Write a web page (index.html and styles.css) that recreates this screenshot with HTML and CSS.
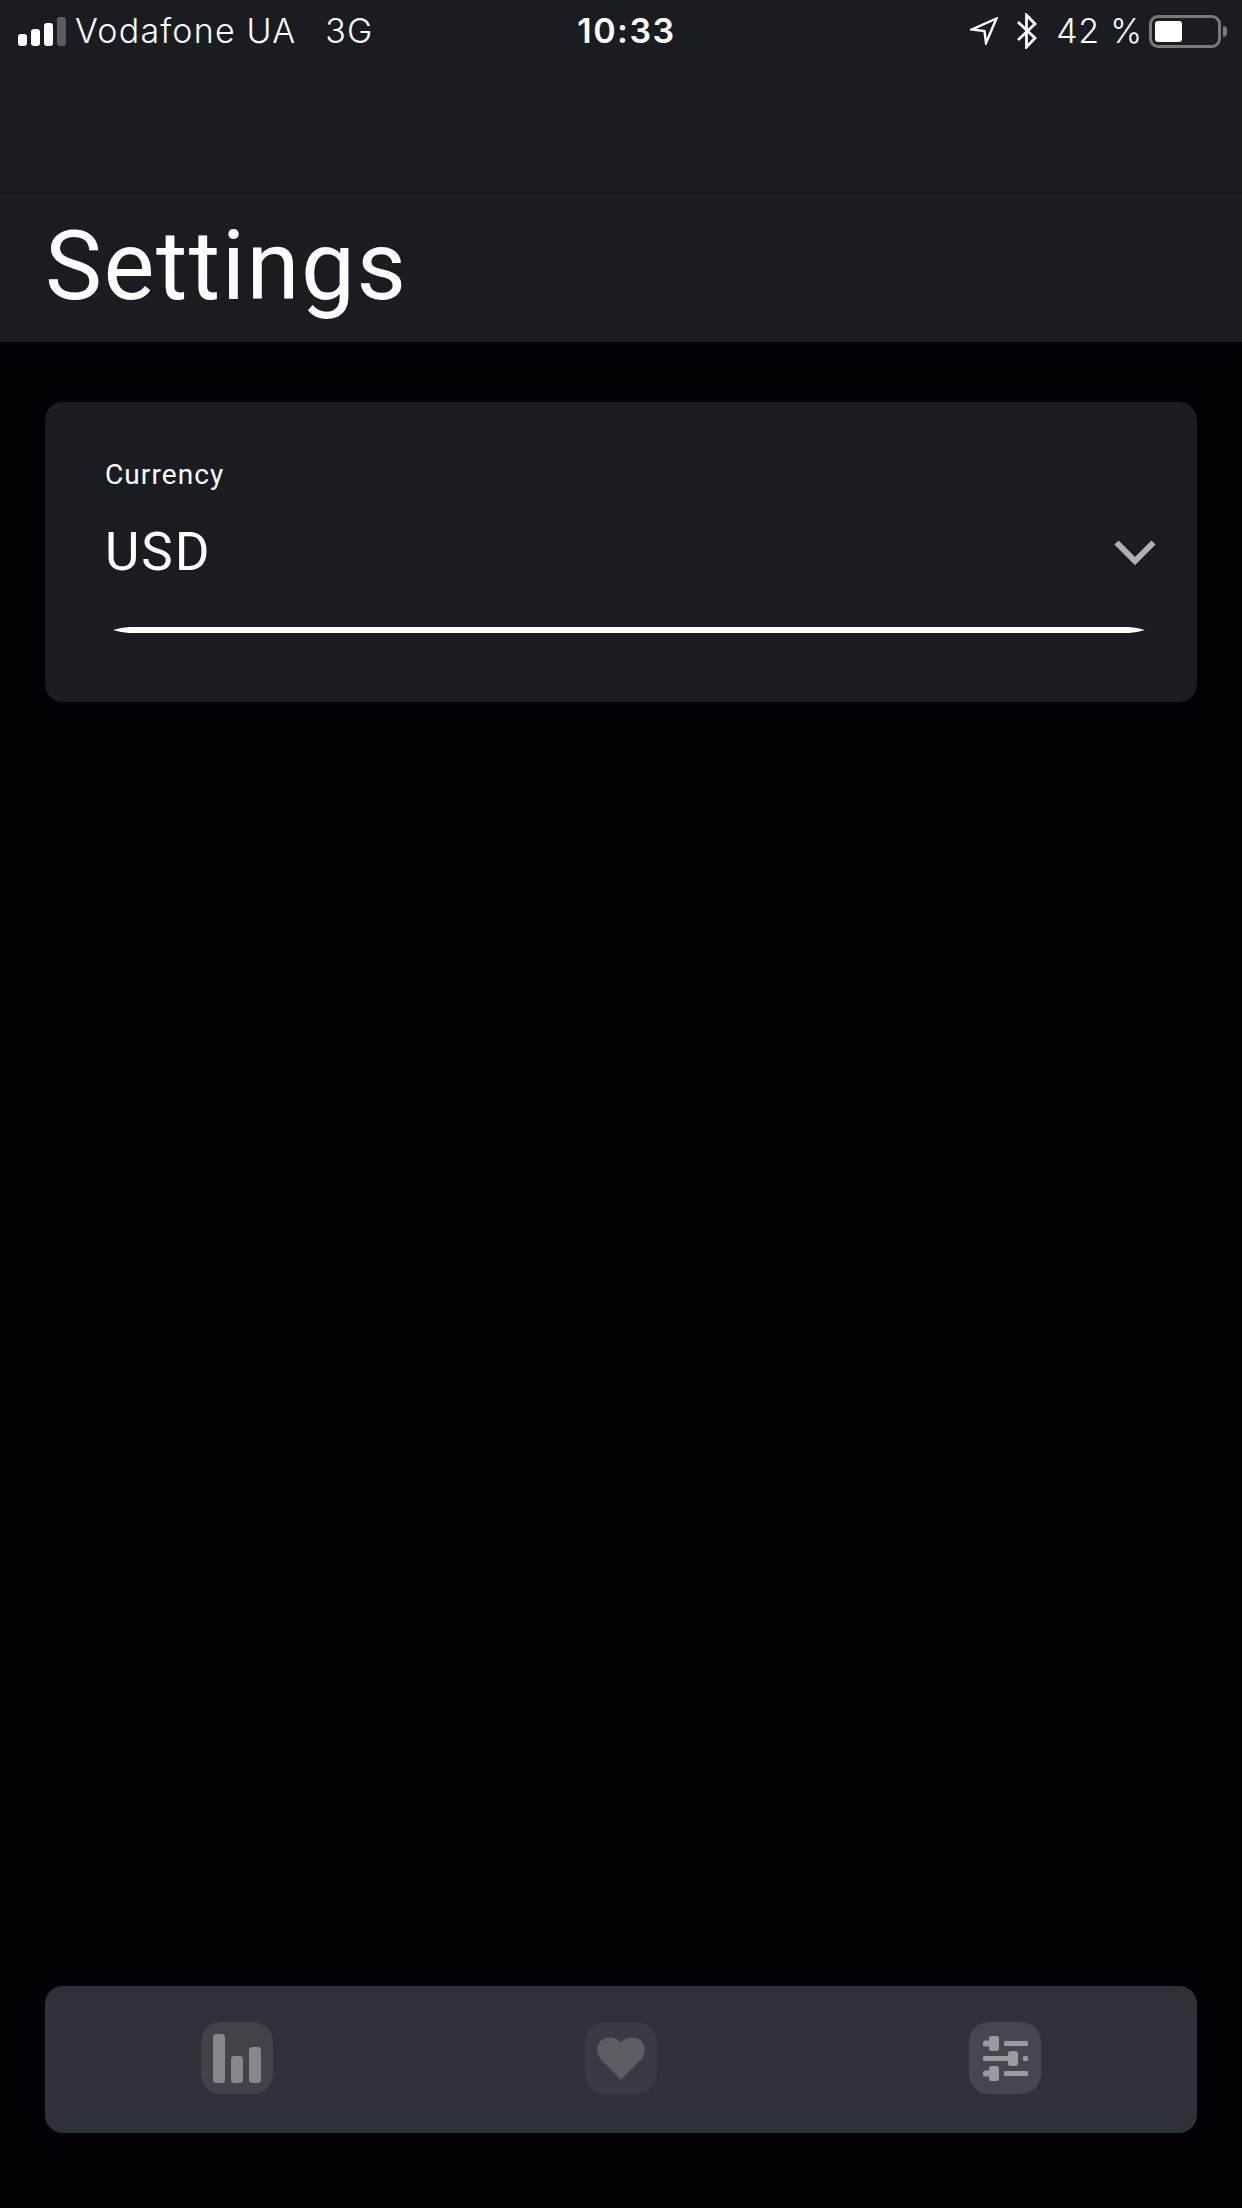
FILE: index.html
```html
<!DOCTYPE html>
<html lang="en">
<head>
<meta charset="utf-8">
<title>Settings</title>
<link rel="stylesheet" href="styles.css">
</head>
<body>
<div class="app">
  <header class="header">
    <div class="status">
      <div class="status-left">
        <svg class="signal" width="48" height="29" viewBox="0 0 48 29">
          <rect x="0" y="17" width="9" height="12" rx="3" fill="#fff"/>
          <rect x="13" y="12" width="9" height="17" rx="3" fill="#fff"/>
          <rect x="26" y="6" width="9" height="23" rx="3" fill="#fff"/>
          <rect x="39" y="0" width="9" height="29" rx="3" fill="#5a5d60"/>
        </svg>
        <span class="carrier">Vodafone UA</span>
        <span class="network">3G</span>
      </div>
      <div class="time">10:33</div>
      <div class="status-right">
        <svg class="loc" width="28" height="28" viewBox="0 0 28 28"><path d="M26.500 1.500 L2 12.500 L14.500 14 L16 26 Z" fill="none" stroke="#fff" stroke-width="2.400" stroke-linejoin="miter"/></svg>
        <svg class="bt" width="22" height="36" viewBox="0 0 22 36"><path d="M2 9 L19 25 L10.500 34 L10.500 2 L19 11 L2 27" fill="none" stroke="#fff" stroke-width="2.800"/></svg>
        <span class="pct">42 %</span>
        <div class="battery"><div class="battery-fill"></div></div>
        <div class="battery-nub"></div>
      </div>
    </div>
    <div class="nav-spacer"></div>
    <div class="title-bar"><h1 class="title">Settings</h1></div>
  </header>
  <main class="main">
    <section class="card">
      <div class="label">Currency</div>
      <div class="select-row">
        <span class="value">USD</span>
        <svg class="chevron" width="44" height="27" viewBox="0 0 44 27"><path d="M3.500 3.500 L22 22 L40.500 3.500" fill="none" stroke="#b0b0b2" stroke-width="6"/></svg>
      </div>
      <svg class="underline" width="1032" height="6" viewBox="0 0 1032 6"><path d="M0 3 Q8 .5 16 0 L1016 0 Q1024 .5 1032 3 Q1024 5.500 1016 6 L16 6 Q8 5.500 0 3 Z" fill="#fff"/></svg>
    </section>
    <nav class="tabbar">
      <div class="tab tab-stats">
        <svg width="48" height="49" viewBox="0 0 48 49">
          <rect x="0" y="0" width="12" height="49" rx="3.500" fill="#87888c"/>
          <rect x="18" y="22" width="12" height="27" rx="3.500" fill="#87888c"/>
          <rect x="36" y="13" width="12" height="36" rx="3.500" fill="#87888c"/>
        </svg>
      </div>
      <div class="tab tab-fav">
        <svg width="48" height="43" viewBox="0 0 48 43"><path d="M24 43 L4 22.500 C-1.500 16.500 -1 7 5 2.800 C10.500 -1 18.500 -.5 24 5.500 C29.500 -.5 37.500 -1 43 2.800 C49 7 49.500 16.500 44 22.500 Z" fill="#5b5d62"/></svg>
      </div>
      <div class="tab tab-set">
        <svg width="45" height="45" viewBox="0 0 45 45" fill="#9a9ba0">
          <rect x="0" y="4.500" width="7" height="6" rx="2"/>
          <rect x="6" y="0" width="10" height="15" rx="2.500"/>
          <rect x="21" y="5" width="24" height="5" rx="1.500"/>
          <rect x="0" y="20" width="26" height="5" rx="1.500"/>
          <rect x="25" y="15" width="10" height="15" rx="2.500"/>
          <rect x="40" y="20" width="5" height="5" rx="1.500"/>
          <rect x="0" y="34.500" width="7" height="6" rx="2"/>
          <rect x="6" y="30" width="10" height="15" rx="2.500"/>
          <rect x="21" y="35" width="24" height="5" rx="1.500"/>
        </svg>
      </div>
    </nav>
  </main>
</div>
</body>
</html>
```
FILE: styles.css
```css
* { box-sizing: border-box; }
html, body { margin: 0; padding: 0; }
body {
  width: 1242px;
  height: 2208px;
  background: #020206;
  color: #fff;
  font-family: "Roboto", "Open Sans", sans-serif;
  overflow: hidden;
}
.app { display: flex; flex-direction: column; height: 2208px; }
.header { background: #191c21; height: 342px; flex: none; display: flex; flex-direction: column; }

.status {
  height: 62px;
  display: grid;
  grid-template-columns: 1fr auto 1fr;
  align-items: center;
  font-family: "Inter", sans-serif;
  font-size: 34px;
  font-weight: 300;
  line-height: 62px;
  letter-spacing: 1.200px;
}
.status-left { display: flex; align-items: center; padding-left: 18px; }
.signal { margin-right: 9px; }
.carrier { margin-right: 29px; }
.time { font-weight: 600; font-size: 34px; letter-spacing: 1.500px; padding-left: 11px; }
.status-right { display: flex; align-items: center; justify-content: flex-end; padding-right: 15px; }
.loc { margin-right: 18px; }
.bt { margin-right: 18px; }
.pct { margin-right: 6px; letter-spacing: .800px; }
.battery {
  width: 72px;
  height: 33px;
  border: 3px solid #77797c;
  border-radius: 9px;
  padding: 3px;
  margin-right: 2px;
}
.battery-fill { width: 27px; height: 100%; background: #fff; border-radius: 3px; }
.battery-nub { width: 4px; height: 11px; background: #77797c; border-radius: 0 4px 4px 0; }

.nav-spacer { height: 131px; border-bottom: 1px solid #121418; flex: none; }
.title-bar { flex: 1; padding-left: 45px; }
.title {
  margin: 0;
  font-size: 96px;
  font-weight: 400;
  line-height: 146px;
  letter-spacing: 1.500px;
}

.main { flex: 1; display: flex; flex-direction: column; padding: 60px 45px 75px; }
.card {
  height: 300px;
  background: #191c21;
  border-radius: 18px;
  padding: 56px 36px 0 60px;
  flex: none;
}
.label { font-size: 28px; line-height: 34px; font-weight: 400; letter-spacing: 1.100px; }
.select-row { display: flex; justify-content: space-between; align-items: center; height: 70px; margin-top: 25px; padding-right: 4px; }
.value { font-size: 53px; font-weight: 400; line-height: 70px; letter-spacing: 2px; }
.underline { display: block; margin: 40px 0 0 8px; }

.tabbar {
  margin-top: auto;
  height: 147px;
  padding-bottom: 3px;
  background: #2e3138;
  border-radius: 18px;
  display: grid;
  grid-template-columns: repeat(3, 1fr);
  align-items: center;
  justify-items: center;
}
.tab { width: 72px; height: 72px; border-radius: 20px; display: flex; align-items: center; justify-content: center; }
.tab-stats { background: #424349; }
.tab-fav { background: #383b42; }
.tab-set { background: #45474e; }
```
